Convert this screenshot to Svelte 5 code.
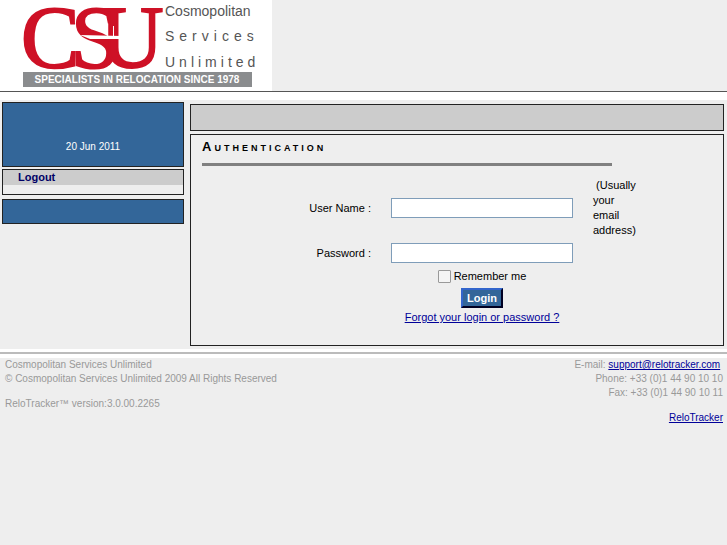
<script lang="ts">
    let username = $state("");
    let password = $state("");
    let remember = $state(false);

    const today = "20 Jun 2011";
    const version = "3.0.00.2265";

    function login(event: SubmitEvent) {
        event.preventDefault();
    }
</script>

<header>
    <div class="logo">
        <svg width="272" height="91" viewBox="0 0 272 91" role="img" aria-label="CSU">
            <g class="letters">
                <text x="21" y="67">C</text>
                <text x="71" y="67">S</text>
                <text x="100" y="67">U</text>
            </g>
            <path d="M80 35 L122 36 L122 39 L90 39 Z" fill="#fff" />
            <path d="M113 26 H114 V36 H113 Z" fill="#fff" />
            <g class="name">
                <text x="165" y="16">Cosmopolitan</text>
                <text x="165" y="41" class="services">Services</text>
                <text x="165" y="67" class="unlimited">Unlimited</text>
            </g>
            <rect x="23" y="72" width="229" height="15" fill="#8a8c8e" />
            <text x="137" y="83" class="slogan">SPECIALISTS IN RELOCATION SINCE 1978</text>
        </svg>
    </div>
</header>

<div class="content">
    <aside>
        <div class="box date">{today}</div>
        <nav class="box">
            <a href="#logout">Logout</a>
        </nav>
        <div class="box bottom"></div>
    </aside>

    <main>
        <div class="box bar"></div>
        <section class="box panel">
            <h1>Authentication</h1>
            <form onsubmit={login}>
                <label for="username">User Name :</label>
                <input id="username" type="text" bind:value={username} />
                <span class="hint">&nbsp;(Usually your email address)</span>

                <label for="password">Password :</label>
                <input id="password" type="password" bind:value={password} />

                <div class="actions">
                    <div class="remember">
                        <input id="remember" type="checkbox" bind:checked={remember} />
                        <label for="remember">Remember me</label>
                    </div>
                    <button type="submit">Login</button>
                    <a href="#forgot">Forgot your login or password ?</a>
                </div>
            </form>
        </section>
    </main>
</div>

<div class="divider"></div>

<footer>
    <div>
        <p>Cosmopolitan Services Unlimited</p>
        <p>© Cosmopolitan Services Unlimited 2009 All Rights Reserved</p>
        <p class="last">ReloTracker™ version:{version}</p>
    </div>
    <div class="contact">
        <p>E-mail: <a href="mailto:support@relotracker.com">support@relotracker.com</a>&nbsp;</p>
        <p>Phone: +33 (0)1 44 90 10 10</p>
        <p>Fax: +33 (0)1 44 90 10 11</p>
        <p class="last"><a href="#relotracker">ReloTracker</a></p>
    </div>
</footer>

<style>
    :global(body) {
        margin: 0;
        background-color: #eee;
        color: #000;
        font-family: "Liberation Sans", Arial, Helvetica, sans-serif;
        font-size: 11px;
        line-height: 15px;
    }
    header {
        border-bottom: 1px solid #555;
    }
    .logo {
        width: 272px;
        background-color: #fff;
    }
    .logo svg {
        display: block;
    }
    .letters {
        font-family: "Liberation Serif", "Times New Roman", serif;
        font-size: 88px;
        fill: #ce1126;
        stroke: #ce1126;
        stroke-width: 2px;
    }
    .name {
        font-size: 14px;
        fill: #555;
    }
    .services {
        letter-spacing: 5px;
    }
    .unlimited {
        letter-spacing: 4px;
    }
    .slogan {
        font-size: 10px;
        font-weight: bold;
        fill: #fff;
        text-anchor: middle;
    }
    .content {
        display: flex;
        gap: 6px;
        padding: 2px 3px 3px 2px;
        border-top: 8px solid #fff;
    }
    .box {
        box-sizing: border-box;
        border: 1px solid #222;
    }
    aside {
        flex: 0 0 182px;
    }
    .date {
        height: 65px;
        padding-top: 36px;
        background-color: #336699;
        color: #fff;
        font-size: 10px;
        text-align: center;
    }
    nav {
        height: 26px;
        margin: 2px 0 4px;
    }
    nav a {
        display: block;
        padding-left: 15px;
        background-color: #ccc;
        color: #000066;
        font-weight: bold;
        text-decoration: none;
    }
    .bottom {
        height: 25px;
        background-color: #336699;
    }
    main {
        flex: 1;
        padding-top: 2px;
    }
    .bar {
        height: 27px;
        margin-bottom: 3px;
        background-color: #ccc;
    }
    .panel {
        padding: 4px 0 20px;
    }
    h1 {
        width: 77%;
        margin: 0 0 12px 11px;
        padding-bottom: 7px;
        border-bottom: 3px solid #808080;
        font-size: 9px;
        letter-spacing: 3px;
        text-transform: uppercase;
    }
    h1::first-letter {
        font-size: 13px;
    }
    form {
        display: grid;
        grid-template-columns: 18fr 182px 13fr;
        column-gap: 20px;
        align-items: center;
    }
    form > label {
        text-align: right;
    }
    form > input {
        box-sizing: border-box;
        width: 100%;
        height: 20px;
        margin: 5px 0;
        padding: 1px 3px;
        border: 1px solid #7f9db9;
        background-color: #fff;
        font: inherit;
    }
    .hint {
        width: 48px;
    }
    .actions {
        grid-column: 2;
        display: flex;
        flex-direction: column;
        align-items: center;
    }
    .remember {
        display: flex;
        align-items: center;
        gap: 3px;
        margin: 1px 0 4px;
    }
    .remember input {
        appearance: none;
        box-sizing: border-box;
        width: 13px;
        height: 13px;
        margin: 0;
        border: 1px solid #999;
        border-radius: 1px;
        background-color: #f4f4f4;
    }
    .remember input:checked {
        background-color: #336699;
    }
    button {
        height: 20px;
        margin-bottom: 2px;
        padding: 0 4px;
        border: 2px solid;
        border-color: #3366cc #000022 #000022 #3366cc;
        background-color: #336699;
        color: #fff;
        font: bold 11px "Liberation Sans", Arial, sans-serif;
    }
    a {
        color: #000099;
    }
    .divider {
        height: 2px;
        border: solid #fff;
        border-width: 3px 0 4px;
        background-color: #bbb;
    }
    footer {
        display: flex;
        justify-content: space-between;
        padding: 0 4px 0 5px;
        color: #999;
        font-size: 10px;
        line-height: 14px;
    }
    footer p {
        margin: 0;
    }
    footer .last {
        margin-top: 11px;
    }
    .contact {
        text-align: right;
    }
</style>
